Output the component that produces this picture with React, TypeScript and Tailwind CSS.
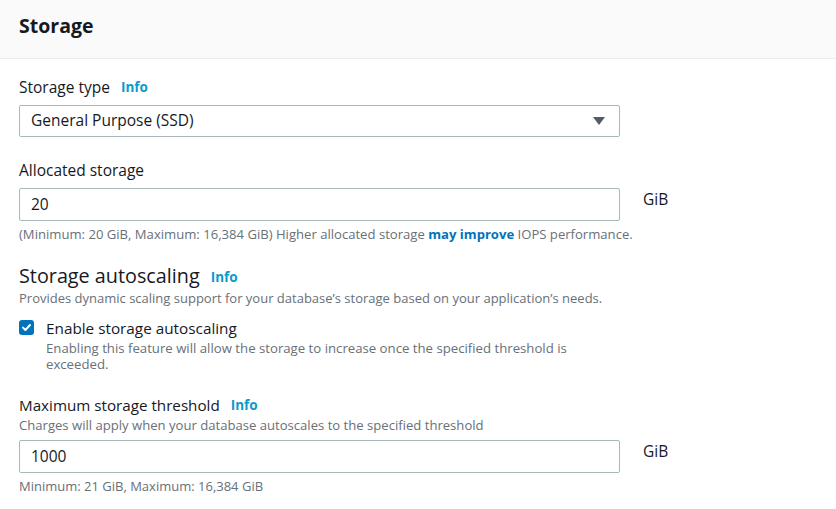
import React from "react";

const font = { fontFamily: '"Open Sans", "Noto Sans", Arial, sans-serif' };

const Info = ({ className = "" }: { className?: string }) => (
  <span className={`ml-[11px] text-[13.5px] font-bold text-[#0a9acd] ${className}`}>Info</span>
);

const NumberField = ({ value }: { value: string }) => (
  <div className="flex items-start">
    <div className="flex h-[33px] w-[601px] items-center rounded-[2px] border border-[#aab7b8] px-[11px] text-[15.5px] text-[#16191f]">
      {value}
    </div>
    <span className="ml-[23px] text-[15.5px] text-[#16191f]">GiB</span>
  </div>
);

export default function App() {
  return (
    <div className="min-h-[509px] w-[836px] bg-white text-[#16191f]" style={font}>
      <div className="flex h-[59px] items-center border-b border-[#eaeded] bg-[#fafafa] px-[19px] pb-[6px]">
        <h2 className="text-[19.5px] font-bold leading-[24px]">Storage</h2>
      </div>

      <div className="px-[19px]">
        <div className="mt-[18px] flex items-center text-[15.5px] leading-[20px]">
          Storage type
          <Info />
        </div>
        <div className="mt-[8px] flex h-[32px] w-[601px] items-center justify-between rounded-[2px] border border-[#aab7b8] pl-[11px] pr-[13px] text-[15.5px]">
          <span>General Purpose (SSD)</span>
          <svg width="14" height="10" viewBox="0 0 14 10">
            <path d="M1 1h12L7 9z" fill="#545b64" />
          </svg>
        </div>

        <div className="mt-[23px] text-[15.5px] leading-[20px]">Allocated storage</div>
        <div className="mt-[8px]">
          <NumberField value="20" />
        </div>
        <p className="mt-[5px] text-[13.1px] leading-[16px] text-[#687078]">
          (Minimum: 20 GiB, Maximum: 16,384 GiB) Higher allocated storage{" "}
          <span className="font-bold text-[#0073bb]">may improve</span> IOPS performance.
        </p>

        <div className="mt-[21px] flex items-center text-[19.8px] leading-[24px]">
          Storage autoscaling
          <Info className="mt-[2px]" />
        </div>
        <p className="mt-[1px] text-[13px] leading-[16px] text-[#687078]">
          Provides dynamic scaling support for your database’s storage based on your application’s needs.
        </p>

        <div className="mt-[12px] flex items-start">
          <div className="mt-[2px] flex h-[15px] w-[15px] items-center justify-center rounded-[3px] bg-[#0073bb]">
            <svg width="11" height="11" viewBox="0 0 11 11">
              <path d="M2 5.6l2.4 2.4L9 3" fill="none" stroke="#fff" strokeWidth="2" strokeLinecap="round" strokeLinejoin="round" />
            </svg>
          </div>
          <div className="ml-[12px] w-[560px]">
            <div className="text-[15.3px] leading-[20px]">Enable storage autoscaling</div>
            <p className="mt-[2px] text-[13.2px] leading-[16px] text-[#687078]">
              Enabling this feature will allow the storage to increase once the specified threshold is exceeded.
            </p>
          </div>
        </div>

        <div className="mt-[23px] flex items-center text-[15.2px] leading-[20px]">
          Maximum storage threshold
          <Info />
        </div>
        <p className="mt-[2px] text-[13.1px] leading-[16px] text-[#687078]">
          Charges will apply when your database autoscales to the specified threshold
        </p>
        <div className="mt-[7px]">
          <NumberField value="1000" />
        </div>
        <p className="mt-[5px] text-[13px] leading-[16px] text-[#687078]">
          Minimum: 21 GiB, Maximum: 16,384 GiB
        </p>
      </div>
    </div>
  );
}
